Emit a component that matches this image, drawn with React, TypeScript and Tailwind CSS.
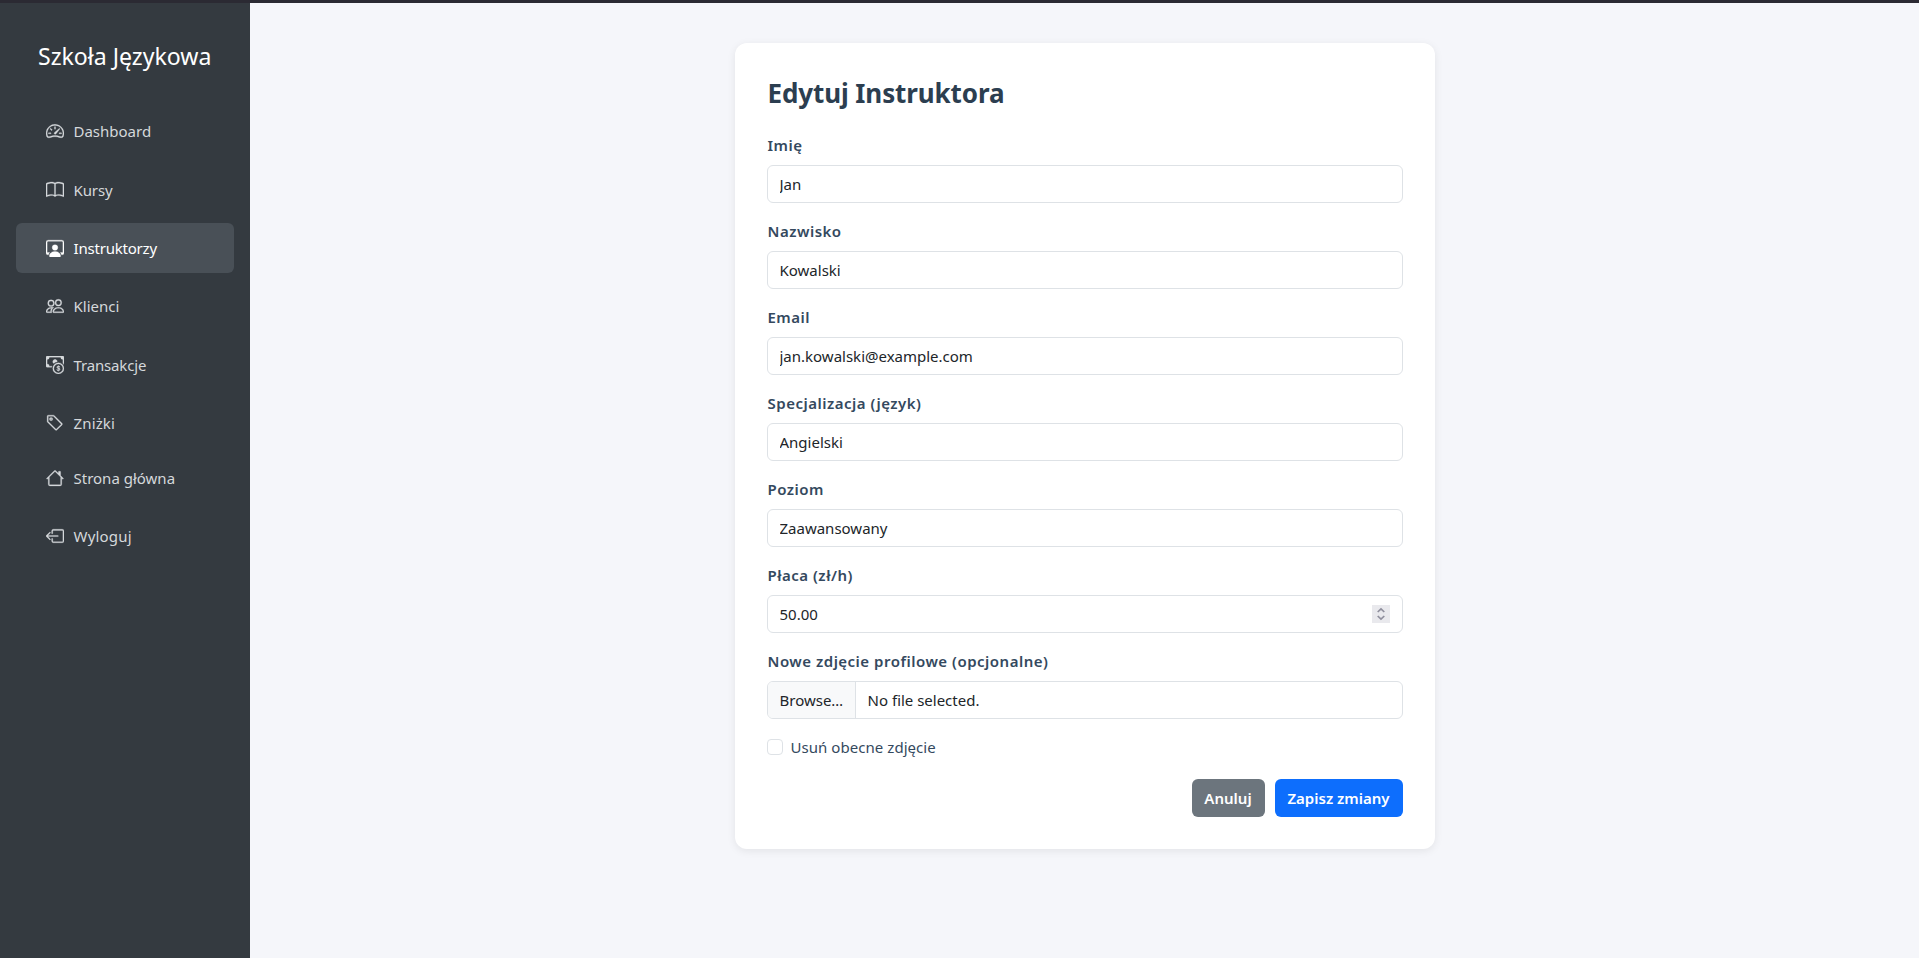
import type { ReactNode } from "react";
import type { IconType } from "react-icons";
import {
  BsSpeedometer2,
  BsBook,
  BsPersonWorkspace,
  BsPeople,
  BsCashCoin,
  BsTag,
  BsHouse,
  BsBoxArrowLeft,
} from "react-icons/bs";

type NavItem = { label: string; icon: IconType; spacing: string; tracking: string; active?: boolean };

const navItems: NavItem[] = [
  { label: "Dashboard", icon: BsSpeedometer2, spacing: "mb-[8.8px]", tracking: "tracking-normal" },
  { label: "Kursy", icon: BsBook, spacing: "mb-[8.8px]", tracking: "tracking-[-0.1px]" },
  { label: "Instruktorzy", icon: BsPersonWorkspace, spacing: "mb-[8.8px]", tracking: "tracking-[-0.2px]", active: true },
  { label: "Klienci", icon: BsPeople, spacing: "mb-[8.8px]", tracking: "tracking-normal" },
  { label: "Transakcje", icon: BsCashCoin, spacing: "mb-[8.8px]", tracking: "tracking-[-0.15px]" },
  { label: "Zniżki", icon: BsTag, spacing: "mb-[4.8px]", tracking: "tracking-[0.15px]" },
  { label: "Strona główna", icon: BsHouse, spacing: "mb-[8.8px]", tracking: "tracking-normal" },
  { label: "Wyloguj", icon: BsBoxArrowLeft, spacing: "", tracking: "tracking-[0.2px]" },
];

function Sidebar() {
  return (
    <aside className="flex w-[250px] shrink-0 flex-col bg-[#343a40] px-4 pt-[35px]">
      <h1 className="pl-[22px] text-[23.1px] leading-[36px] text-white">Szkoła Językowa</h1>
      <nav className="mt-[32.5px] flex flex-col">
        {navItems.map(({ label, icon: Icon, spacing, tracking, active }) => (
          <a
            key={label}
            href="#"
            className={`flex h-[49.6px] items-center gap-[9.5px] rounded-md pl-[30px] ${spacing} ${
              active ? "bg-[#495057] text-white" : "text-[#d5d8db]"
            }`}
          >
            <Icon className="size-[18px] shrink-0 [stroke-width:0.25px]" />
            <span className={tracking}>{label}</span>
          </a>
        ))}
      </nav>
    </aside>
  );
}

function Field({ label, children }: { label: string; children: ReactNode }) {
  return (
    <label className="mb-4 block">
      <span className="mb-2 block h-6 pl-px font-semibold leading-6 tracking-[0.5px] text-[#34495e]">{label}</span>
      <span className="flex h-[38px] w-full items-stretch overflow-hidden rounded-md border border-[#dee2e6] bg-white text-[#212529]">
        {children}
      </span>
    </label>
  );
}

function TextInput({ value }: { value: string }) {
  return <input className="w-full px-3 outline-none" defaultValue={value} />;
}

function Spinner() {
  return (
    <span className="mr-3 flex h-[18px] w-[18px] shrink-0 items-center justify-center self-center bg-[#e9e9ed]">
      <svg width="18" height="18" viewBox="0 0 18 18" fill="none" stroke="#8f8f9d" strokeWidth="1.7">
        <path d="M5.7 7 9 3.9l3.3 3.1M5.7 11l3.3 3.1 3.3-3.1" />
      </svg>
    </span>
  );
}

export default function App() {
  return (
    <div className="flex h-[958px] flex-col overflow-hidden bg-[#f5f6fa] font-['Noto_Sans','Open_Sans',sans-serif] text-[15px] leading-6">
      <div className="h-[3px] shrink-0 bg-[#2b2a33]" />
      <div className="flex flex-1">
        <Sidebar />
        <main className="flex flex-1 items-start justify-center pt-10">
          <section className="h-[806px] w-[700px] rounded-xl bg-white p-8 shadow-[0_2px_8px_rgba(0,0,0,0.08)]">
            <h2 className="mb-[23px] h-[35px] pl-px text-[26px] font-bold leading-[36px] tracking-[-0.1px] text-[#2c3e50]">
              Edytuj Instruktora
            </h2>
            <Field label="Imię"><TextInput value="Jan" /></Field>
            <Field label="Nazwisko"><TextInput value="Kowalski" /></Field>
            <Field label="Email"><TextInput value="jan.kowalski@example.com" /></Field>
            <Field label="Specjalizacja (język)"><TextInput value="Angielski" /></Field>
            <Field label="Poziom"><TextInput value="Zaawansowany" /></Field>
            <Field label="Płaca (zł/h)">
              <TextInput value="50.00" />
              <Spinner />
            </Field>
            <Field label="Nowe zdjęcie profilowe (opcjonalne)">
              <span className="flex w-[88px] items-center border-r border-[#dee2e6] bg-[#f8f9fa] pl-3">Browse…</span>
              <span className="flex items-center pl-3">No file selected.</span>
            </Field>
            <label className="flex h-6 items-center gap-2 text-[#34495e]">
              <input type="checkbox" className="size-4 appearance-none rounded border border-[#dee2e6] bg-white" />
              <span className="tracking-[0.05px]">Usuń obecne zdjęcie</span>
            </label>
            <div className="mt-5 flex justify-end gap-[10px] font-semibold text-white">
              <button className="h-[38px] w-[73px] rounded-md bg-[#6c757d]">Anuluj</button>
              <button className="h-[38px] w-[128px] rounded-md bg-[#0d6efd]">Zapisz zmiany</button>
            </div>
          </section>
        </main>
      </div>
    </div>
  );
}
